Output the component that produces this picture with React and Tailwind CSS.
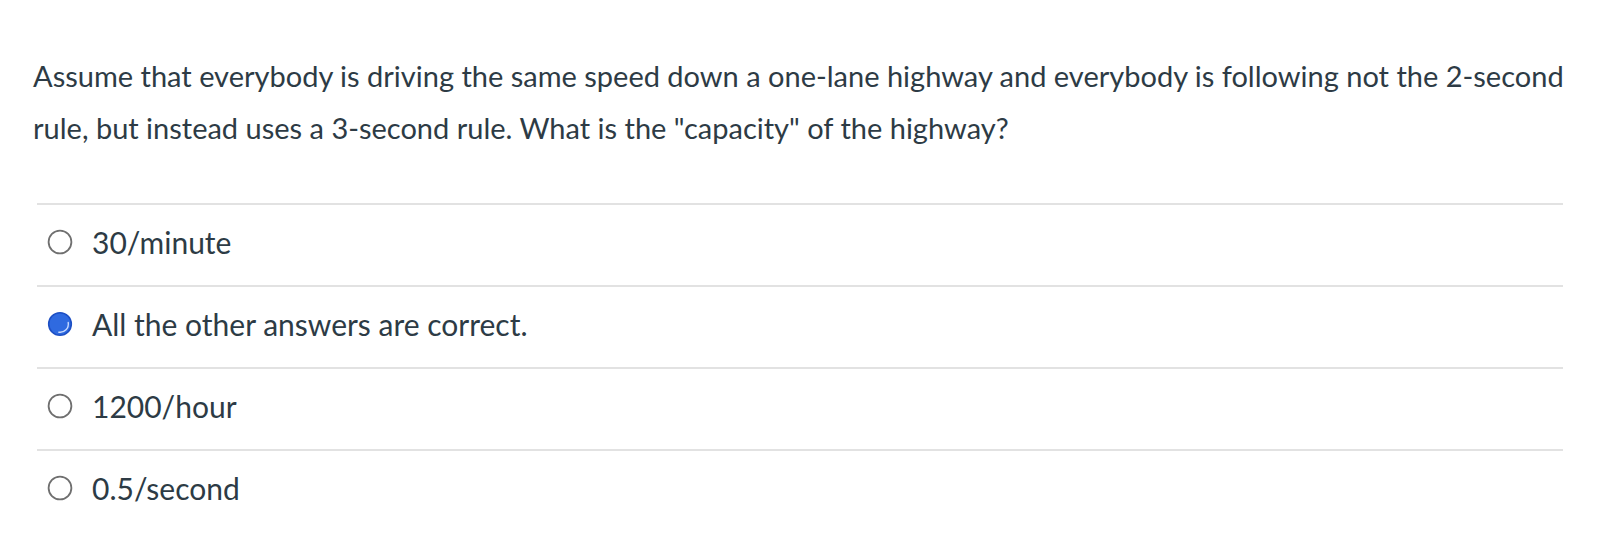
import React from "react";

const options = [
  { label: "30/minute", selected: false },
  { label: "All the other answers are correct.", selected: true },
  { label: "1200/hour", selected: false },
  { label: "0.5/second", selected: false },
];

function Radio({ selected }) {
  if (selected) {
    return (
      <svg width="26" height="26" viewBox="0 0 26 26" className="shrink-0">
        <circle cx="13" cy="13" r="11.3" fill="#2f6ae0" stroke="#1d4fc4" strokeWidth="1.6" />
        <path d="M21.2 11.5 A8.3 8.3 0 0 1 11.8 21.2" fill="none" stroke="#c9dbff" strokeWidth="1.4" strokeLinecap="round" />
      </svg>
    );
  }
  return (
    <svg width="26" height="26" viewBox="0 0 26 26" className="shrink-0">
      <circle cx="13" cy="13" r="11.4" fill="#ffffff" stroke="#6f6f6f" strokeWidth="1.8" />
    </svg>
  );
}

export default function App() {
  return (
    <div
      className="w-[1600px] h-[555px] bg-white text-[#2d3b45]"
      style={{ fontFamily: "Lato, 'Noto Sans', sans-serif" }}
    >
      <p className="pl-[33px] pr-[24px] pt-[50px] text-[29px] leading-[52px]">
        Assume that everybody is driving the same speed down a one-lane highway and everybody is following not the 2-second rule, but instead uses a 3-second rule. What is the "capacity" of the highway?
      </p>
      <div className="mt-[49px] ml-[37px] mr-[37px]">
        {options.map((o, i) => (
          <div
            key={i}
            className="h-[82px] border-t-[2px] border-[#e2e2e2] flex items-center pl-[10px] gap-[19px] pb-[7px]"
          >
            <Radio selected={o.selected} />
            <span className="text-[30px] leading-none">{o.label}</span>
          </div>
        ))}
      </div>
    </div>
  );
}
